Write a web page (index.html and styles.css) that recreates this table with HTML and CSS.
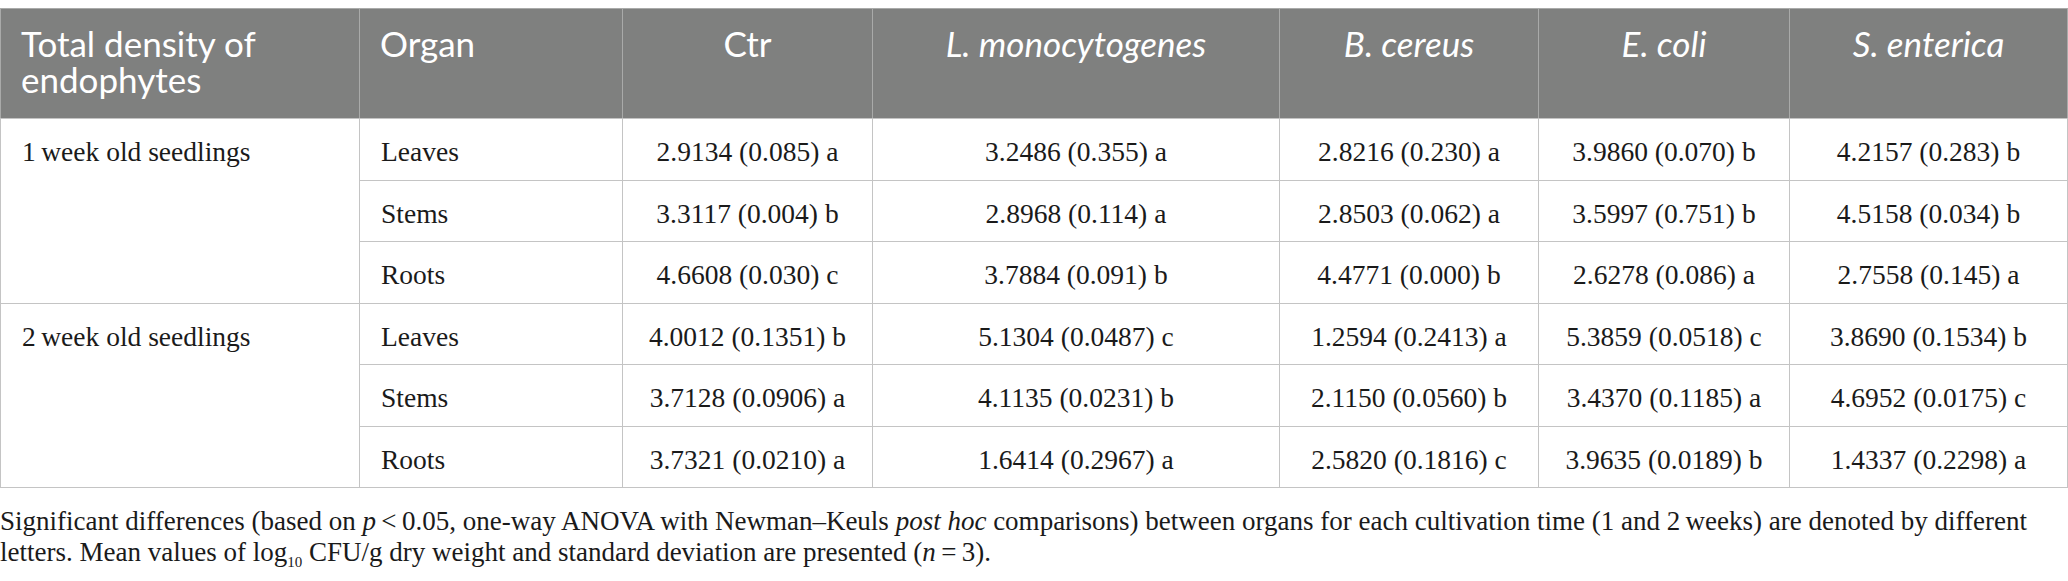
FILE: index.html
```html
<!DOCTYPE html>
<html lang="en">
  <head>
    <meta charset="utf-8">
    <title>Total density of endophytes</title>
    <link rel="stylesheet" href="styles.css">
  </head>
  <body>
    <table class="data-table">
      <colgroup>
        <col class="col-group">
        <col class="col-organ">
        <col class="col-ctr">
        <col class="col-lm">
        <col class="col-bc">
        <col class="col-ec">
        <col class="col-se">
      </colgroup>
      <thead>
        <tr>
          <th class="left">Total density of endophytes</th>
          <th class="left">Organ</th>
          <th>Ctr</th>
          <th><i>L. monocytogenes</i></th>
          <th><i>B. cereus</i></th>
          <th><i>E. coli</i></th>
          <th><i>S. enterica</i></th>
        </tr>
      </thead>
      <tbody>
        <tr>
          <td class="left" rowspan="3">1&#8201;week old seedlings</td>
          <td class="left">Leaves</td>
          <td>2.9134 (0.085) a</td>
          <td>3.2486 (0.355) a</td>
          <td>2.8216 (0.230) a</td>
          <td>3.9860 (0.070) b</td>
          <td>4.2157 (0.283) b</td>
        </tr>
        <tr>
          <td class="left">Stems</td>
          <td>3.3117 (0.004) b</td>
          <td>2.8968 (0.114) a</td>
          <td>2.8503 (0.062) a</td>
          <td>3.5997 (0.751) b</td>
          <td>4.5158 (0.034) b</td>
        </tr>
        <tr>
          <td class="left">Roots</td>
          <td>4.6608 (0.030) c</td>
          <td>3.7884 (0.091) b</td>
          <td>4.4771 (0.000) b</td>
          <td>2.6278 (0.086) a</td>
          <td>2.7558 (0.145) a</td>
        </tr>
        <tr>
          <td class="left" rowspan="3">2&#8201;week old seedlings</td>
          <td class="left">Leaves</td>
          <td>4.0012 (0.1351) b</td>
          <td>5.1304 (0.0487) c</td>
          <td>1.2594 (0.2413) a</td>
          <td>5.3859 (0.0518) c</td>
          <td>3.8690 (0.1534) b</td>
        </tr>
        <tr>
          <td class="left">Stems</td>
          <td>3.7128 (0.0906) a</td>
          <td>4.1135 (0.0231) b</td>
          <td>2.1150 (0.0560) b</td>
          <td>3.4370 (0.1185) a</td>
          <td>4.6952 (0.0175) c</td>
        </tr>
        <tr>
          <td class="left">Roots</td>
          <td>3.7321 (0.0210) a</td>
          <td>1.6414 (0.2967) a</td>
          <td>2.5820 (0.1816) c</td>
          <td>3.9635 (0.0189) b</td>
          <td>1.4337 (0.2298) a</td>
        </tr>
      </tbody>
    </table>

    <p class="note">
      Significant differences (based on <i>p</i>&#8201;&lt;&#8201;0.05, one-way ANOVA with Newman&ndash;Keuls <i>post hoc</i> comparisons) between organs for each cultivation time (1 and 2&#8201;weeks) are denoted by different
      letters. Mean values of log<sub>10</sub> CFU/g dry weight and standard deviation are presented (<i>n</i>&#8201;=&#8201;3).
    </p>
  </body>
</html>
```

FILE: styles.css
```css
body {
  margin: 0;
  padding-top: 8px;
  background: #ffffff;
  color: #1a1a1a;
  font-family: "Liberation Serif", "Times New Roman", serif;
}
.data-table {
  width: 2067px;
  table-layout: fixed;
  border-collapse: collapse;
  border: 1px solid #c4c4c4;
}
.col-group { width: 359px; }
.col-organ { width: 263px; }
.col-ctr { width: 250px; }
.col-lm { width: 407px; }
.col-bc { width: 259px; }
.col-ec { width: 251px; }
.col-se { width: 278px; }

.data-table th {
  background-color: #7f807f;
  color: #ffffff;
  font-family: Lato, "Open Sans", sans-serif;
  font-weight: normal;
  font-size: 35px;
  line-height: 36px;
  text-align: center;
  vertical-align: top;
  padding: 16px 20px 21px;
  border: 1px solid #a9aaa9;
  border-bottom-color: #c4c4c4;
  height: 72px;
}
.data-table td {
  font-size: 27.5px;
  line-height: 32px;
  text-align: center;
  vertical-align: top;
  padding: 17px 21px 11.5px;
  border: 1px solid #c4c4c4;
}
.data-table .left {
  text-align: left;
}
.note {
  margin: 18px 0 0;
  width: 2030px;
  font-size: 27px;
  line-height: 31px;
  color: #1a1a1a;
}
.note sub {
  font-size: 15px;
  line-height: 0;
}
```
